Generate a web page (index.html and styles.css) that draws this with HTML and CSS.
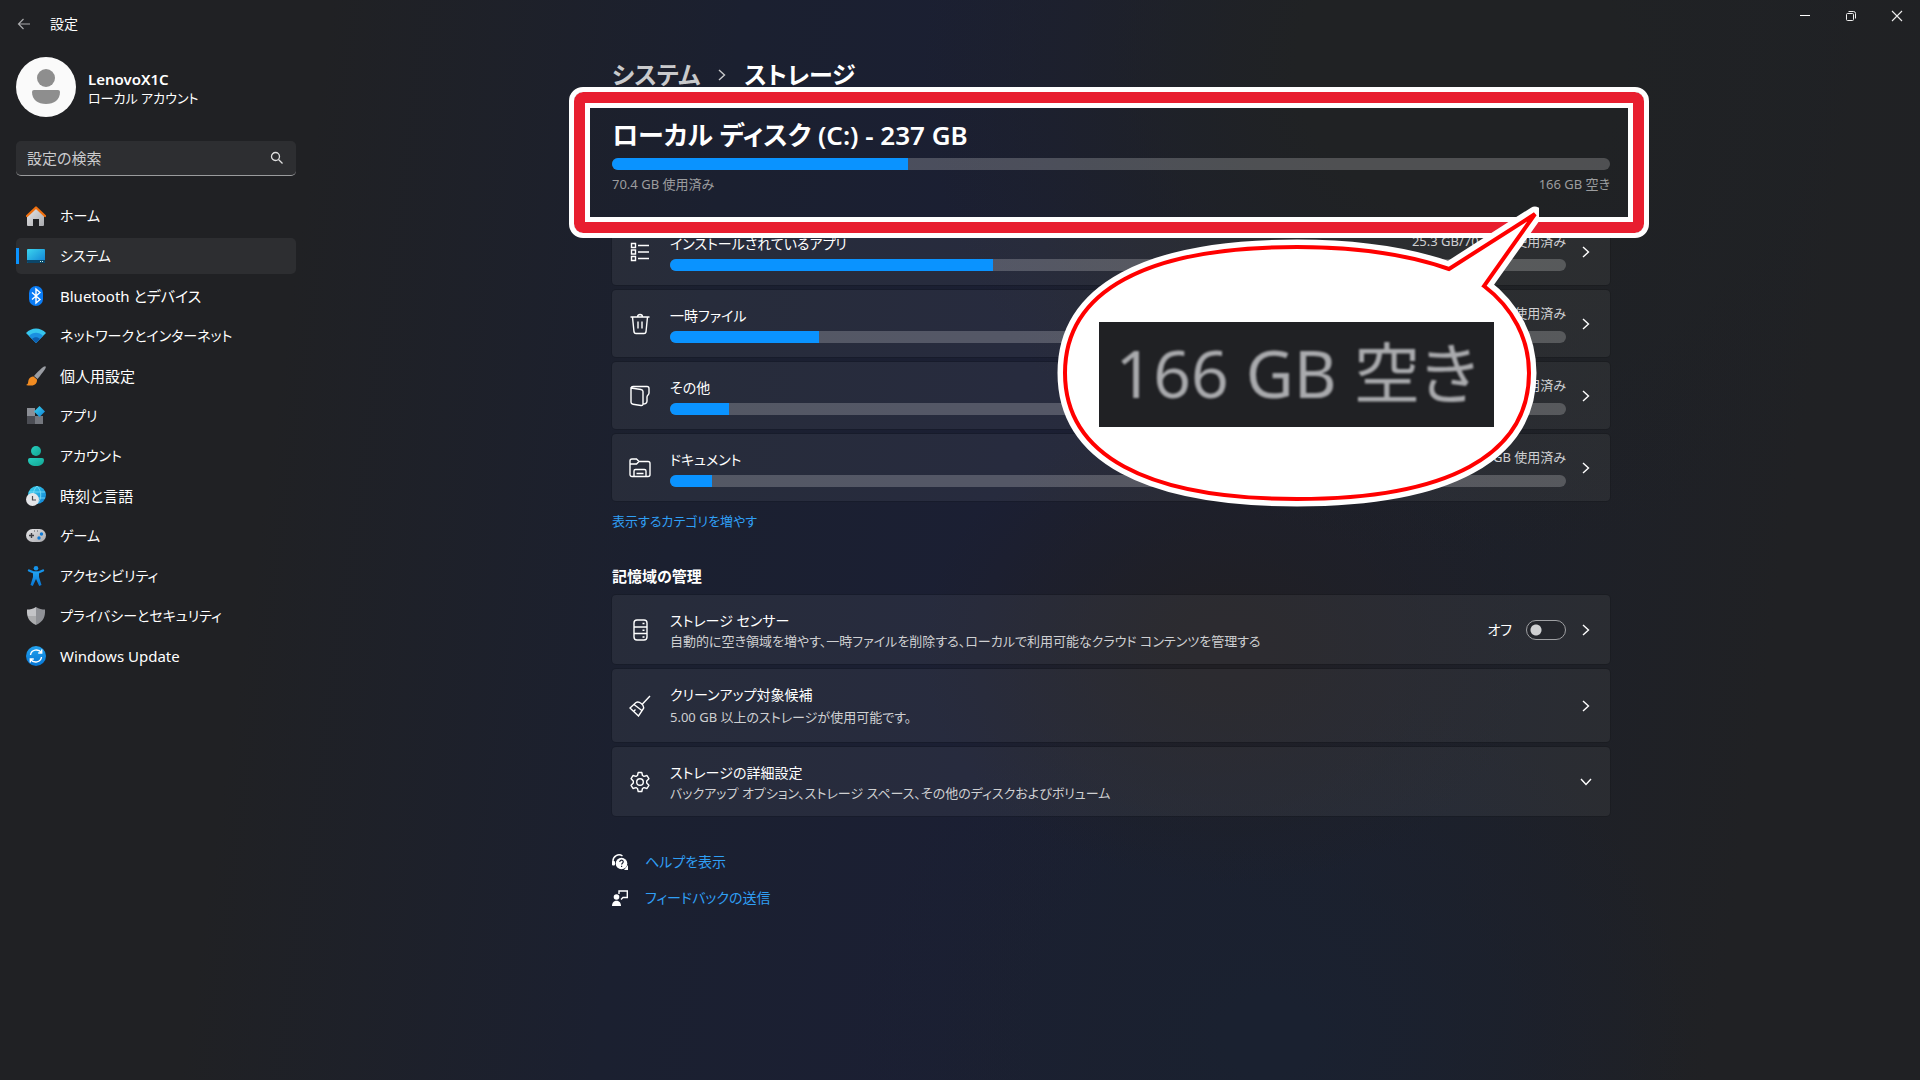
FILE: index.html
```html
<!DOCTYPE html>
<html lang="ja">
<head>
<meta charset="utf-8">
<meta name="viewport" content="width=device-width, initial-scale=1">
<title>設定</title>
<link rel="stylesheet" href="styles.css">
</head>
<body>
<svg width="0" height="0" class="defs" aria-hidden="true">
  <defs>
    <linearGradient id="gGrey" x1="0" y1="0" x2="1" y2="1"><stop offset="0" stop-color="#e6e6e8"/><stop offset="1" stop-color="#a9aaae"/></linearGradient>
    <linearGradient id="gCyan" x1="0" y1="0" x2="1" y2="1"><stop offset="0" stop-color="#3bd5ee"/><stop offset="1" stop-color="#0f7fd4"/></linearGradient>
    <linearGradient id="gTeal" x1="0" y1="0" x2="1" y2="1"><stop offset="0" stop-color="#27cfc0"/><stop offset="1" stop-color="#12a592"/></linearGradient>
    <linearGradient id="gBlue" x1="0" y1="0" x2="0" y2="1"><stop offset="0" stop-color="#22a2ef"/><stop offset="1" stop-color="#0675d3"/></linearGradient>
  </defs>
  <symbol id="chevron" viewBox="0 0 12 12"><path d="M3 1l5.5 5L3 11" fill="none" stroke="currentColor" stroke-width="1.4"/></symbol>
</svg>

<header class="titlebar">
  <button class="back" type="button" aria-label="戻る"><svg width="14" height="14" viewBox="0 0 14 14"><path d="M13 7H1.5M6.5 2l-5 5 5 5" fill="none" stroke="#a9aaac" stroke-width="1.2"/></svg></button>
  <span class="app-name">設定</span>
  <div class="window-buttons">
    <button type="button" aria-label="最小化"><svg width="12" height="12" viewBox="0 0 12 12"><path d="M1 5.5h10" stroke="#fff"/></svg></button>
    <button type="button" aria-label="元に戻す"><svg width="12" height="12" viewBox="0 0 12 12" fill="none" stroke="#eee"><rect x="1.500" y="3.500" width="7" height="7" rx="1"/><path d="M3.500 1.500h5a2 2 0 0 1 2 2v5"/></svg></button>
    <button type="button" aria-label="閉じる"><svg width="12" height="12" viewBox="0 0 12 12"><path d="M1 1l10 10M11 1L1 11" stroke="#eee" stroke-width="1.100"/></svg></button>
  </div>
</header>

<div class="layout">
  <aside class="sidebar">
    <div class="account">
      <svg class="avatar" width="60" height="60" viewBox="0 0 60 60"><circle cx="30" cy="30" r="30" fill="#fafafa"/><circle cx="30" cy="21" r="9" fill="#8e8e8e"/><path d="M18 33h24a2 2 0 0 1 2 2c0 8-6 12-14 12s-14-4-14-12a2 2 0 0 1 2-2z" fill="#8e8e8e"/></svg>
      <div class="account-text">
        <div class="account-name">LenovoX1C</div>
        <div class="account-type">ローカル アカウント</div>
      </div>
    </div>

    <form class="search" role="search">
      <input type="search" placeholder="設定の検索" aria-label="設定の検索">
      <svg width="14" height="14" viewBox="0 0 14 14" fill="none" stroke="#e0e0e0" stroke-width="1.300"><circle cx="5.500" cy="5.500" r="4"/><path d="M8.500 8.500l4 4"/></svg>
    </form>

    <nav>
      <ul class="nav">
        <li><a class="kana" href="#"><svg viewBox="0 0 20 20"><path d="M2 9l8-7 8 7v10a1 1 0 0 1-1 1h-4v-7H7v7H2a1 1 0 0 1-1-1V9z" fill="url(#gGrey)"/><path d="M1 10l9-8.500L19 10" fill="none" stroke="#f0700f" stroke-width="2.400" stroke-linecap="round" stroke-linejoin="round"/></svg>ホーム</a></li>
        <li><a class="kana" href="#" aria-current="page"><svg viewBox="0 0 20 20"><rect x="1" y="3" width="18" height="14" rx="1" fill="url(#gCyan)"/><path d="M1 14h18v2a1 1 0 0 1-1 1H2a1 1 0 0 1-1-1z" fill="#0b4669"/><path d="M14 15.500h1M16 15.500h1" stroke="#cfe"/></svg>システム</a></li>
        <li><a href="#"><svg viewBox="0 0 20 20"><rect x="3" y="0" width="14" height="20" rx="7" fill="#0a7cf5"/><path d="M6 6.500l8 7-4 3.500V3l4 3.500-8 7" fill="none" stroke="#fff" stroke-width="1.400"/></svg>Bluetooth とデバイス</a></li>
        <li><a class="kana" href="#"><svg viewBox="0 0 20 20"><path d="M0 7c5.500-6 14.500-6 20 0L10 17z" fill="#36c6ee"/><path d="M3 10c4-4.300 10-4.300 14 0l-7 7z" fill="#1a8fe0"/><path d="M6 13c2.400-2.500 5.600-2.500 8 0l-4 4z" fill="#0c5fb0"/></svg>ネットワークとインターネット</a></li>
        <li><a href="#"><svg viewBox="0 0 20 20"><path d="M19.500.5c1 1-.5 3-8 12.500L8 10C15 2.500 18.500-.4 19.500.5z" fill="#9a9da3"/><path d="M7.500 10.500l3.500 3c.5 6-6 7-11 5.500 3-1 1.500-3 3-6 1-2 3-2.800 4.500-2.500z" fill="#f28c22"/></svg>個人用設定</a></li>
        <li><a class="kana" href="#"><svg viewBox="0 0 20 20"><path d="M1 2h8v8H1z" fill="#8b8e95"/><path d="M1 10h8v8H1z" fill="#4b4d54"/><path d="M9 10h8v8H9z" fill="#74777e"/><path d="M13.500 0l5.500 5.500-5.500 5.500L8 5.500z" fill="url(#gCyan)"/></svg>アプリ</a></li>
        <li><a class="kana" href="#"><svg viewBox="0 0 20 20"><circle cx="10" cy="5" r="5" fill="url(#gTeal)"/><path d="M4 12h12a2 2 0 0 1 2 2c0 4-3.500 6-8 6s-8-2-8-6a2 2 0 0 1 2-2z" fill="url(#gTeal)"/></svg>アカウント</a></li>
        <li><a href="#"><svg viewBox="0 0 20 20"><circle cx="11" cy="9" r="9" fill="url(#gCyan)"/><path d="M3 6h16M3 12h16M11 0c-5 5-5 13 0 18M11 0c5 5 5 13 0 18" fill="none" stroke="#7fe0fa" stroke-width=".8"/><circle cx="6.500" cy="13.500" r="6.500" fill="#e4e5e8"/><path d="M6.500 10v4H10" fill="none" stroke="#4c4d52" stroke-width="1.200"/></svg>時刻と言語</a></li>
        <li><a class="kana" href="#"><svg viewBox="0 0 20 20"><rect x="0" y="3" width="20" height="13" rx="6.500" fill="url(#gGrey)"/><path d="M3 9.500h5M5.500 7v5" stroke="#3c3d42" stroke-width="1.400"/><circle cx="15.500" cy="8" r="1.700" fill="#0f7ad6"/><circle cx="13" cy="12" r="1.700" fill="#0f7ad6"/><path d="M8 5h1M11 5h1" stroke="#55565b"/></svg>ゲーム</a></li>
        <li><a class="kana" href="#"><svg viewBox="0 0 20 20"><circle cx="10" cy="2.300" r="2.300" fill="#1593ea"/><path d="M3 4.500l5 2h4l5-2" fill="none" stroke="#1593ea" stroke-width="2.400" stroke-linecap="round"/><path d="M7 6h6v5l2.500 8-2.300 1L10 13l-3.200 7-2.300-1L7 11z" fill="url(#gBlue)"/></svg>アクセシビリティ</a></li>
        <li><a class="kana" href="#"><svg viewBox="0 0 20 20"><path d="M10 1c3 2 6 2.500 9 2.500C19.500 11 17 16 10 19z" fill="#8f9196"/><path d="M10 1C7 3 4 3.500 1 3.500.5 11 3 16 10 19z" fill="#c3c4c7"/><path d="M1 10h9v9c-5-2-8-5-9-9z" fill="#000" opacity=".12"/></svg>プライバシーとセキュリティ</a></li>
        <li><a href="#"><svg viewBox="0 0 20 20"><circle cx="10" cy="10" r="10" fill="url(#gBlue)"/><path d="M4.500 9c.6-5.500 8-6.500 10.800-2.500M15.500 11c-.6 5.500-8 6.500-10.800 2.500M15.700 3.500V7h-3.500M4.300 16.500V13h3.500" fill="none" stroke="#fff" stroke-width="1.400"/></svg>Windows Update</a></li>
      </ul>
    </nav>
  </aside>

  <main class="content">
    <div class="column">
      <h1 class="breadcrumb"><a href="#">システム</a><svg width="12" height="12"><use href="#chevron"/></svg><span>ストレージ</span></h1>

      <section class="disk">
        <h2>ローカル ディスク (C:) - 237 GB</h2>
        <div class="meter" role="progressbar" aria-label="使用済み" aria-valuenow="30"><span style="width:29.7%"></span></div>
        <div class="disk-labels"><span>70.4 GB 使用済み</span><span>166 GB 空き</span></div>
      </section>

      <div class="cards">
        <a class="card" href="#">
          <svg class="icon" viewBox="0 0 22 22"><path d="M2.500 2.500h4v4h-4zM2.500 9h4v4h-4zM2.500 15.500h4v4h-4zM9 4.500h11M9 11h11M9 17.500h11"/></svg>
          <div class="usage"><div class="usage-head"><span class="title">インストールされているアプリ</span><span class="amount">25.3 GB/70.4 GB 使用済み</span></div>
          <div class="meter" role="progressbar" aria-label="アプリ" aria-valuenow="36"><span style="width:36%"></span></div></div>
          <svg class="chevron"><use href="#chevron"/></svg>
        </a>
        <a class="card" href="#">
          <svg class="icon" viewBox="0 0 22 22"><path d="M1.500 4h19M3.500 4l1.500 15a2 2 0 0 0 2 1.500h8a2 2 0 0 0 2-1.500l1.500-15M8.500 4c0-3.300 5-3.300 5 0M9 8.500v7M13 8.500v7"/></svg>
          <div class="usage"><div class="usage-head"><span class="title">一時ファイル</span><span class="amount">使用済み</span></div>
          <div class="meter" role="progressbar" aria-label="一時ファイル" aria-valuenow="17"><span style="width:16.6%"></span></div></div>
          <svg class="chevron"><use href="#chevron"/></svg>
        </a>
        <a class="card" href="#">
          <svg class="icon" viewBox="0 0 22 22"><path d="M2 3l10 1.500c1.300.2 2 1 2 2V19c0 1-.8 1.700-2 1.500l-8-1.200c-1.200-.2-2-1-2-2zM2 3c.3-1 1-1.500 2-1.500h14c1.300 0 2 .8 2 2V8c0 2-2 2-2 4v4c0 2-1.500 3-4 3"/></svg>
          <div class="usage"><div class="usage-head"><span class="title">その他</span><span class="amount">使用済み</span></div>
          <div class="meter" role="progressbar" aria-label="その他" aria-valuenow="7"><span style="width:6.6%"></span></div></div>
          <svg class="chevron"><use href="#chevron"/></svg>
        </a>
        <a class="card" href="#">
          <svg class="icon" viewBox="0 0 22 22"><path d="M5 19.500H3a2 2 0 0 1-2-2V4a2 2 0 0 1 2-2h4.500L10 4.500h9a2 2 0 0 1 2 2v11a2 2 0 0 1-2 2h-2M1 7h6.500L10 4.500M5 19.500V14a1.500 1.500 0 0 1 1.500-1.500h9A1.500 1.500 0 0 1 17 14v5.500zM7.500 16.500h7"/></svg>
          <div class="usage"><div class="usage-head"><span class="title">ドキュメント</span><span class="amount">GB 使用済み</span></div>
          <div class="meter" role="progressbar" aria-label="ドキュメント" aria-valuenow="5"><span style="width:4.7%"></span></div></div>
          <svg class="chevron"><use href="#chevron"/></svg>
        </a>
      </div>
      <a class="more" href="#">表示するカテゴリを増やす</a>

      <h3 class="section-title">記憶域の管理</h3>
      <div class="cards">
        <div class="card">
          <svg class="icon" viewBox="0 0 22 22"><rect x="5" y="1" width="13" height="20" rx="3"/><path d="M5 8h13M5 14.500h13M13.500 4.500h2M13.500 11.200h2M13.500 18h2"/></svg>
          <div class="text"><label class="title" for="sense">ストレージ センサー</label><div class="sub">自動的に空き領域を増やす、一時ファイルを削除する、ローカルで利用可能なクラウド コンテンツを管理する</div></div>
          <span class="state">オフ</span>
          <input class="toggle" id="sense" type="checkbox" role="switch">
          <svg class="chevron"><use href="#chevron"/></svg>
        </div>
        <a class="card roomy" href="#">
          <svg class="icon" viewBox="0 0 22 22"><path d="M21 1l-7.500 8M7 7.500c3-2 8.500 2.500 7.500 6L9.500 21 1 13zM5 9.500l8.500 6.500M4.500 16.500l2-2"/></svg>
          <div class="text"><div class="title">クリーンアップ対象候補</div><div class="sub">5.00 GB 以上のストレージが使用可能です。</div></div>
          <svg class="chevron"><use href="#chevron"/></svg>
        </a>
        <a class="card" href="#">
          <svg class="icon" viewBox="0 0 22 22"><circle cx="11" cy="11" r="3.300"/><path d="M9.200 1.500h3.600l.7 3 1.500.9 3-.9 1.900 3.200-2.200 2.200v2.200l2.200 2.200-1.900 3.200-3-.9-1.500.9-.7 3H9.200l-.7-3-1.500-.9-3 .9-1.900-3.200 2.200-2.200V9.900L2.100 7.700 4 4.500l3 .9 1.500-.9z" stroke-linejoin="round"/></svg>
          <div class="text"><div class="title">ストレージの詳細設定</div><div class="sub">バックアップ オプション、ストレージ スペース、その他のディスクおよびボリューム</div></div>
          <svg class="chevron down"><use href="#chevron"/></svg>
        </a>
      </div>

      <div class="help">
        <a href="#"><svg viewBox="0 0 16 16"><path d="M1 11V7a6 6 0 0 1 9.500-5" fill="none" stroke="#fff" stroke-width="1.500"/><rect x="0" y="7" width="3" height="4.500" rx="1" fill="#fff"/><circle cx="9.500" cy="9.500" r="5.800" fill="#fff"/><path d="M12 16h4v-5z" fill="#fff"/><path d="M7.800 8c0-2.500 3.600-2.300 3.400 0-.1 1.200-1.600 1.200-1.600 2.600M9.600 11.800v1.200" fill="none" stroke="#1b2032" stroke-width="1.200"/></svg>ヘルプを表示</a>
        <a href="#"><svg viewBox="0 0 16 16"><circle cx="4.500" cy="7" r="2.800" fill="#fff"/><path d="M0 16c0-7 9-7 9 0z" fill="#fff"/><path d="M7 4V1h8.300v6.500H11L9 9.500" fill="none" stroke="#fff" stroke-width="1.400"/></svg>フィードバックの送信</a>
      </div>

      <div class="frame" aria-hidden="true"></div>
      <div class="bubble">
        <svg width="484" height="310" viewBox="1055 202 484 310" aria-hidden="true" stroke-linejoin="round">
          <path d="M1297 247C1356 247 1409 255 1449 269L1535 214 1484 286C1513 308 1529 339 1529 373 1529 455 1448 499 1297 499S1065 455 1065 373 1146 247 1297 247z" fill="#fff" stroke="#fff" stroke-width="15"/>
          <path d="M1297 247C1356 247 1409 255 1449 269L1535 214 1484 286C1513 308 1529 339 1529 373 1529 455 1448 499 1297 499S1065 455 1065 373 1146 247 1297 247z" fill="#fff" stroke="#f00" stroke-width="4" stroke-linejoin="miter"/>
        </svg>
        <div class="closeup"><span>166 GB 空き</span></div>
      </div>
    </div>
  </main>
</div>
</body>
</html>
```
FILE: styles.css
```css
* { box-sizing: border-box; }

body {
  margin: 0;
  min-height: 100vh;
  color: #fff;
  font: 15px/20px "Noto Sans", "Noto Sans CJK JP", sans-serif;
  font-feature-settings: "palt";
  background:
    radial-gradient(ellipse 28% 46% at 76% 6%, #202224 30%, transparent),
    radial-gradient(ellipse 16% 22% at 64% 60%, #201f24 10%, transparent),
    radial-gradient(ellipse 22% 34% at 66% 96%, #1a2130 10%, transparent),
    linear-gradient(98deg, #202124 16%, #1b2030 36%, #1b1f33 52%, #1d2029 76%, #202124 90%);
}

.defs { position: absolute; }
a { color: inherit; text-decoration: none; }
h1, h2, h3, ul { margin: 0; padding: 0; }
button { padding: 0; border: 0; background: none; color: inherit; }
svg { flex: none; display: block; }

.titlebar { display: flex; align-items: center; height: 48px; padding-left: 17px; }
.back { display: flex; width: 16px; }
.app-name { margin-left: 17px; font-size: 14px; }
.window-buttons { display: flex; align-self: flex-start; margin-left: auto; }
.window-buttons button { display: grid; place-items: center; width: 46px; height: 32px; }

.layout { display: flex; }
.sidebar { flex: none; width: 302px; padding: 9px 6px 0 16px; }
.account { display: flex; align-items: center; gap: 12px; }
.account-text { padding-top: 2px; }
.account-name { font-weight: 600; }
.account-type { font-size: 13px; line-height: 18px; }

.search { display: flex; align-items: center; height: 35px; margin: 24px 0 22px; padding: 0 12px 0 11px; border-radius: 5px; background: #2d2e31; border-bottom: 1px solid #9a9b9d; }
.search input { flex: 1; min-width: 0; padding: 0; border: 0; outline: 0; background: none; color: #fff; font: inherit; }
.search input::placeholder { color: #cbcbcd; opacity: 1; }

.nav { display: grid; gap: 4px; list-style: none; }
.nav a { display: flex; align-items: center; gap: 14px; height: 36px; padding-left: 10px; border-radius: 5px; }
.nav .kana { font-size: 14px; line-height: 22px; }
.nav svg { width: 20px; height: 20px; }
.nav a[aria-current] { background: linear-gradient(#0a93ff, #0a93ff) 0 50% / 3px 16px no-repeat #2d2e31; }

.content { flex: 1; min-width: 0; }
.column { position: relative; max-width: 998px; margin: 0 auto; padding: 9px 0 48px; }

.breadcrumb { display: flex; align-items: center; gap: 16px; font-size: 24px; line-height: 36px; font-weight: 600; }
.breadcrumb a, .breadcrumb svg { color: #c9cacc; }

.disk { margin-top: 24px; }
.disk h2 { font-size: 26px; line-height: 36px; font-weight: 600; }
.meter { height: 12px; margin-top: 5px; overflow: hidden; border-radius: 6px; background: rgba(255, 255, 255, .21); }
.meter span { display: block; height: 100%; background: #0a93ff; }
.disk-labels { display: flex; justify-content: space-between; margin: 4px 0 24px; font-size: 13px; color: #9c9d9f; }

.cards { display: grid; gap: 5px; }
.card { display: flex; align-items: center; padding: 0 18px 0 17px; border-radius: 4px; background: rgba(255, 255, 255, .055); box-shadow: 0 0 0 1px rgba(0, 0, 0, .12); }
.icon { width: 22px; height: 22px; margin-right: 19px; fill: none; stroke: #fff; stroke-width: 1.4; }
.chevron { width: 12px; height: 12px; margin-left: 14px; }
.down { transform: rotate(90deg); }
.usage { flex: 1; padding: 16px 0 14px; }
.usage-head { display: flex; justify-content: space-between; align-items: flex-start; }
.amount { font-size: 13px; line-height: 14px; color: #cfd0d2; }
.text { flex: 1; padding: 16px 0 13px; }
.title { display: block; font-size: 14px; }
.sub { font-size: 13px; color: #cfd0d2; }
.roomy .text { padding-bottom: 15px; }
.roomy .sub { margin-top: 2px; }
.state { margin-right: 14px; font-size: 14px; }
.toggle { appearance: none; width: 40px; height: 20px; margin: 0; border: 1px solid #9fa0a3; border-radius: 10px; background: radial-gradient(circle at 9px 9px, #cfd0d2 5px, transparent 6px) #24262c; }
.toggle:checked { background: radial-gradient(circle at 29px 9px, #111 5px, transparent 6px) #0a93ff; }

.more { display: block; width: fit-content; margin-top: 10px; font-size: 13px; color: #309ff5; }
.section-title { margin: 35px 0 9px; font-size: 15px; line-height: 20px; font-weight: 600; }

.help { display: grid; gap: 16px; justify-items: start; margin-top: 36px; font-size: 14px; color: #309ff5; }
.help a { display: flex; align-items: center; gap: 17px; }
.help svg { width: 16px; height: 16px; }

/* Callouts drawn over the page */
.frame { position: absolute; top: 39px; left: -43px; right: -39px; height: 151px; border: 5px solid #fff; border-radius: 14px; box-shadow: inset 0 0 0 11px #e81e2f, inset 0 0 0 16px #fff; pointer-events: none; }
.bubble { position: absolute; top: 154px; right: 71px; }
.closeup { position: absolute; top: 120px; left: 44px; display: grid; place-items: center; width: 395px; height: 105px; padding-bottom: 6px; background: #202124; color: #a9aaad; font-size: 66px; line-height: 96px; white-space: nowrap; }
.closeup span { filter: blur(1px); }
```
